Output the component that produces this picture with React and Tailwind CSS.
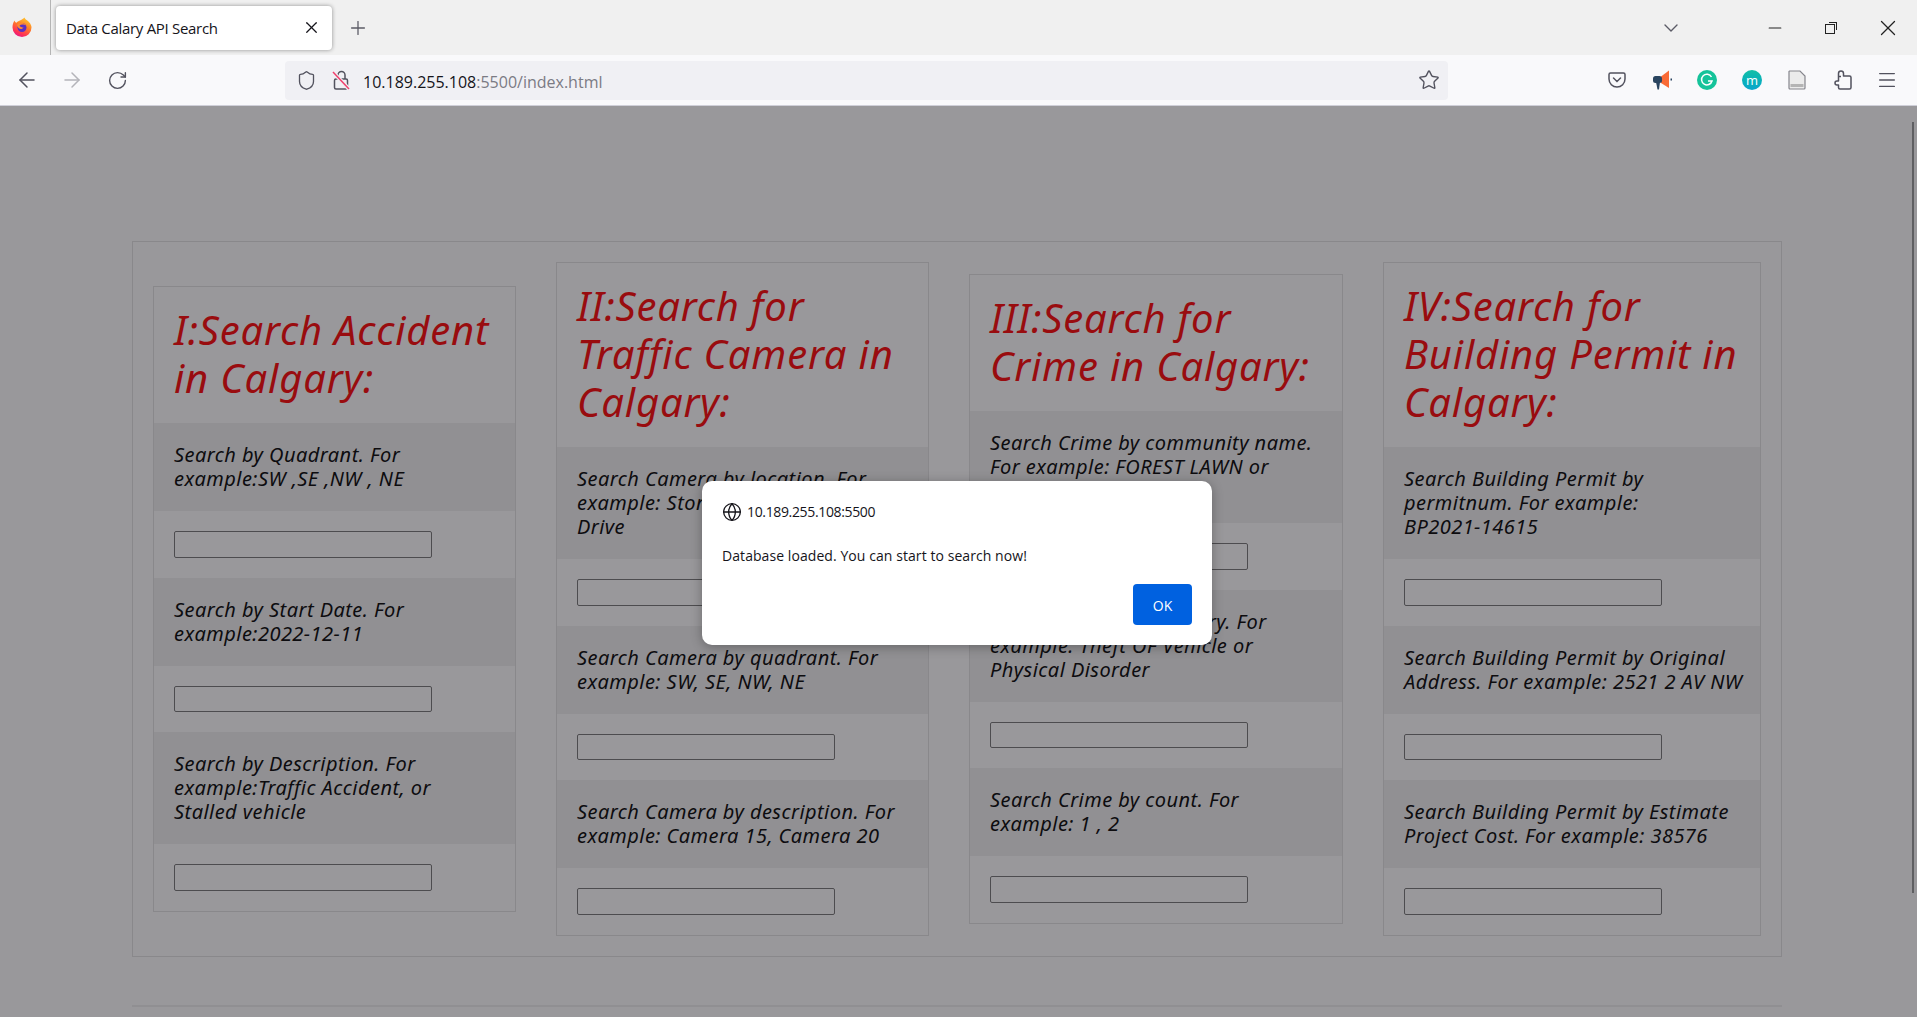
import { ArrowLeft, ArrowRight, RotateCw, Shield, Star, Plus, X, ChevronDown, Minus, Menu, Globe } from "lucide-react"

const cards = [
  {
    title: ["I:Search Accident", "in Calgary:"],
    width: "w-[363px]",
    fields: [
      ["Search by Quadrant. For", "example:SW ,SE ,NW , NE"],
      ["Search by Start Date. For", "example:2022-12-11"],
      ["Search by Description. For", "example:Traffic Accident, or", "Stalled vehicle"],
    ],
  },
  {
    title: ["II:Search for", "Traffic Camera in", "Calgary:"],
    width: "w-[373px]",
    fields: [
      ["Search Camera by location. For", "example: Stoney Trail, Deerfoot", "Drive"],
      ["Search Camera by quadrant. For", "example: SW, SE, NW, NE"],
      ["Search Camera by description. For", "example: Camera 15, Camera 20"],
    ],
  },
  {
    title: ["III:Search for", "Crime in Calgary:"],
    width: "w-[374px]",
    fields: [
      ["Search Crime by community name.", "For example: FOREST LAWN or", "BELTLINE"],
      ["Search Crime by category. For", "example: Theft OF Vehicle or", "Physical Disorder"],
      ["Search Crime by count. For", "example: 1 , 2"],
    ],
  },
  {
    title: ["IV:Search for", "Building Permit in", "Calgary:"],
    width: "w-[378px]",
    fields: [
      ["Search Building Permit by", "permitnum. For example:", "BP2021-14615"],
      ["Search Building Permit by Original", "Address. For example: 2521 2 AV NW"],
      ["Search Building Permit by Estimate", "Project Cost. For example: 38576"],
    ],
  },
]

function FirefoxLogo() {
  return (
    <svg width="20" height="20" viewBox="0 0 20 20">
      <defs>
        <linearGradient id="ffBody" x1="0.8" y1="0" x2="0.3" y2="1">
          <stop offset="0" stopColor="#ffd02e" />
          <stop offset="0.45" stopColor="#ff7a2a" />
          <stop offset="0.8" stopColor="#ff3355" />
          <stop offset="1" stopColor="#e3178a" />
        </linearGradient>
      </defs>
      <path d="M12.500 0.500 C13 2.500 15 3 16.500 4.500 C19 7 19.500 9 19.500 10.500 A9.500 9.500 0 0 1 0.500 10.500 C0.500 8 1 6 2.500 3.500 C3 5 3.500 5.500 4.500 5.800 C6 3.500 9.500 3.500 12.500 0.500Z" fill="url(#ffBody)" />
      <circle cx="10" cy="10.500" r="4.500" fill="#5b2fc4" />
      <path d="M5 8 C7 5 12 5 14.500 8.500 C12 7 9 7 7.500 8.500 C8 10 10 10.500 11.500 10.500 C10 13 6 12.500 5 8Z" fill="#ff8a2e" />
    </svg>
  )
}

function LockOff() {
  return (
    <svg width="20" height="22" viewBox="0 0 20 22" fill="none">
      <path d="M7 10V6a3.500 3.500 0 0 1 7 0v4" stroke="#52525e" strokeWidth="1.5" />
      <rect x="3.500" y="10" width="13" height="10" rx="1.500" stroke="#52525e" strokeWidth="1.5" />
      <path d="M2 3 L18 20" stroke="#f0f0f4" strokeWidth="4" />
      <path d="M2 3 L18 20" stroke="#ef3f6c" strokeWidth="1.5" />
    </svg>
  )
}

function Pocket() {
  return (
    <svg width="18" height="16" viewBox="0 0 18 16" fill="none" stroke="#52525e" strokeWidth="1.5">
      <path d="M2.500 1h13A1.500 1.500 0 0 1 17 2.500V7a8 8 0 0 1-16 0V2.500A1.500 1.500 0 0 1 2.500 1Z" />
      <path d="M5.500 6 L9 9.500 L12.500 6" strokeLinecap="round" />
    </svg>
  )
}

function Megaphone() {
  return (
    <svg width="21" height="20" viewBox="0 0 21 20">
      <path d="M9 6.500 L17 0.500 V18 L9 13Z" fill="#f96a35" />
      <rect x="1" y="6" width="9" height="7" rx="2.500" fill="#2a4560" />
      <path d="M4 12 H8 L7 19.500 H5.500Z" fill="#2a4560" />
      <rect x="18.500" y="8.500" width="1.500" height="2" fill="#2a4560" />
    </svg>
  )
}

function Grammarly() {
  return (
    <svg width="20" height="20" viewBox="0 0 20 20" fill="none">
      <circle cx="10" cy="10" r="10" fill="#15c39a" />
      <path d="M14.500 7 A5.300 5.300 0 1 0 15 11 H11" stroke="#fff" strokeWidth="1.500" />
    </svg>
  )
}

function PageDoc() {
  return (
    <svg width="18" height="20" viewBox="0 0 18 20">
      <path d="M1.500 1 H12 L17 6 V18 a1 1 0 0 1-1 1 H2 a1 1 0 0 1-1-1 V1.500Z" fill="#ebebeb" stroke="#85858c" strokeWidth="1.200" />
      <rect x="2.500" y="14" width="13" height="3" fill="#b4b4b4" />
    </svg>
  )
}

function PuzzleIcon() {
  return (
    <svg width="18" height="20" viewBox="0 0 18 20" fill="none" stroke="#52525e" strokeWidth="1.500" strokeLinejoin="round">
      <path d="M7 6.500 H4.500 V3.500 a2.500 2.500 0 0 1 5 0 V6 H15.500 a1.500 1.500 0 0 1 1.500 1.500 V17.500 a1.500 1.500 0 0 1-1.500 1.500 H6 a1.500 1.500 0 0 1-1.500-1.500 V15 H3 a2 2 0 0 1 0-4 H4.500 V6.500" />
    </svg>
  )
}

function TabBar() {
  return (
    <div className="flex items-center h-[55px] bg-[#f0f0f0] shrink-0">
      <div className="flex items-center justify-center w-[51px] h-full border-r border-[#b5b5b5] mr-[5px]">
        <div className="mr-[7px] mb-[1px]">
          <FirefoxLogo />
        </div>
      </div>
      <div className="flex items-center justify-between w-[276px] h-[44px] bg-white rounded-[4px] shadow-[0_0_4px_rgba(0,0,0,0.4)] pl-[10px] pr-[11px]">
        <span className="pt-[2px] text-[15px] text-[#15141a] font-['Open_Sans',sans-serif] tracking-[-0.3px]">Data Calary API Search</span>
        <X size={19} strokeWidth={1.6} className="text-[#15141a]" />
      </div>
      <Plus size={22} strokeWidth={1.4} className="text-[#5b5b66] ml-[15px]" />
      <div className="flex-1" />
      <ChevronDown size={24} strokeWidth={1.4} className="text-[#5b5b66] mr-[82px]" />
      <Minus size={20} strokeWidth={1.3} className="text-[#222] mr-[40px]" />
      <div className="relative w-[10px] h-[10px] mr-[40px] mt-[3px] border border-[#222]">
        <div className="absolute -top-[3px] -right-[3px] w-[8px] h-[8px] border-t border-r border-[#222]" />
      </div>
      <X size={26} strokeWidth={1.2} className="text-[#222] mr-[16px]" />
    </div>
  )
}

function Toolbar() {
  return (
    <div className="flex items-center h-[51px] bg-[#f9f9fb] border-b border-[#cfcfd8] shrink-0">
      <ArrowLeft size={24} strokeWidth={1.5} className="text-[#52525e] ml-[15px]" />
      <ArrowRight size={24} strokeWidth={1.5} className="text-[#b4b4ba] ml-[21px]" />
      <RotateCw size={21} strokeWidth={1.6} className="text-[#52525e] ml-[23px]" />
      <div className="flex items-center w-[1163px] h-[39px] ml-[157px] bg-[#f0f0f4] rounded-[4px] pl-[11px]">
        <Shield size={21} strokeWidth={1.5} className="text-[#52525e]" />
        <div className="ml-[14px]">
          <LockOff />
        </div>
        <span className="ml-[12px] pt-[3px] text-[16px] font-['Open_Sans',sans-serif] text-[#15141a]">
          10.189.255.108<span className="text-[#7b7b84]">:5500/index.html</span>
        </span>
        <div className="flex-1" />
        <Star size={22} strokeWidth={1.5} className="text-[#52525e] mr-[8px]" />
      </div>
      <div className="ml-[160px]">
        <Pocket />
      </div>
      <div className="ml-[26px]">
        <Megaphone />
      </div>
      <div className="ml-[24px]">
        <Grammarly />
      </div>
      <div className="flex items-center justify-center w-[20px] h-[20px] ml-[25px] rounded-full bg-gradient-to-b from-[#14bfa5] to-[#0aa5cb] text-white text-[13px] leading-none font-['Open_Sans',sans-serif]">m</div>
      <div className="ml-[26px]">
        <PageDoc />
      </div>
      <div className="ml-[28px]">
        <PuzzleIcon />
      </div>
      <Menu size={22} strokeWidth={1.5} className="text-[#52525e] ml-[24px]" />
    </div>
  )
}

function SearchCard({ card }) {
  return (
    <div className={`${card.width} shrink-0 border border-[#e2e2e2]`}>
      <h2 className="px-5 pt-[19px] pb-[21px] text-[40px] leading-[48px] italic text-[#ff0000] tracking-[0.8px] font-normal font-['Noto_Sans',sans-serif]">
        {card.title.map((line) => (
          <span key={line} className="block whitespace-nowrap">{line}</span>
        ))}
      </h2>
      {card.fields.map((field) => (
        <div key={field[0]}>
          <div className="bg-[#f1f1f1] p-5 text-[20px] leading-[24px] italic text-black tracking-[0.45px] font-['Noto_Sans',sans-serif]">
            {field.map((line) => (
              <span key={line} className="block whitespace-nowrap">{line}</span>
            ))}
          </div>
          <div className="p-5">
            <input type="text" className="block w-[258px] h-[26.67px] border border-[#767676] rounded-[2px] bg-white" />
          </div>
        </div>
      ))}
    </div>
  )
}

function AlertDialog() {
  return (
    <div className="w-[510px] h-[164px] bg-white rounded-[10px] shadow-[0_2px_12px_rgba(0,0,0,0.3)] flex flex-col pl-[20px] pr-[20px] pt-[20px] font-['Open_Sans',sans-serif] text-[#15141a]">
      <div className="flex items-center h-[21px]">
        <Globe size={20} strokeWidth={1.6} className="text-[#15141a]" />
        <span className="ml-[5px] text-[14px] tracking-[-0.35px]">10.189.255.108:5500</span>
      </div>
      <p className="mt-[24px] text-[14px] leading-[20px] tracking-[0.07px]">Database loaded. You can start to search now!</p>
      <div className="flex justify-end mt-[18px]">
        <button className="w-[59px] h-[41px] pt-[1px] bg-[#0061e0] rounded-[4px] text-white text-[14px]">OK</button>
      </div>
    </div>
  )
}

export default function App() {
  return (
    <div className="flex flex-col h-screen overflow-hidden bg-white">
      <TabBar />
      <Toolbar />
      <div className="relative flex-1 overflow-hidden">
        <div className="ml-[132px] mt-[135px] w-[1650px]">
          <div className="flex items-center justify-between h-[716px] border border-[#e2e2e2] p-5">
            {cards.map((card) => (
              <SearchCard key={card.title[0]} card={card} />
            ))}
          </div>
          <div className="h-[2px] mt-[48px] bg-[#eeeeee]" />
        </div>
        <div className="absolute inset-0 bg-[#1c1b22]/45 flex justify-center pt-[375px] pr-[3px]">
          <AlertDialog />
        </div>
        <div className="absolute right-[3px] top-[16px] w-[2px] h-[771px] bg-[#5f5f62]" />
      </div>
    </div>
  )
}
